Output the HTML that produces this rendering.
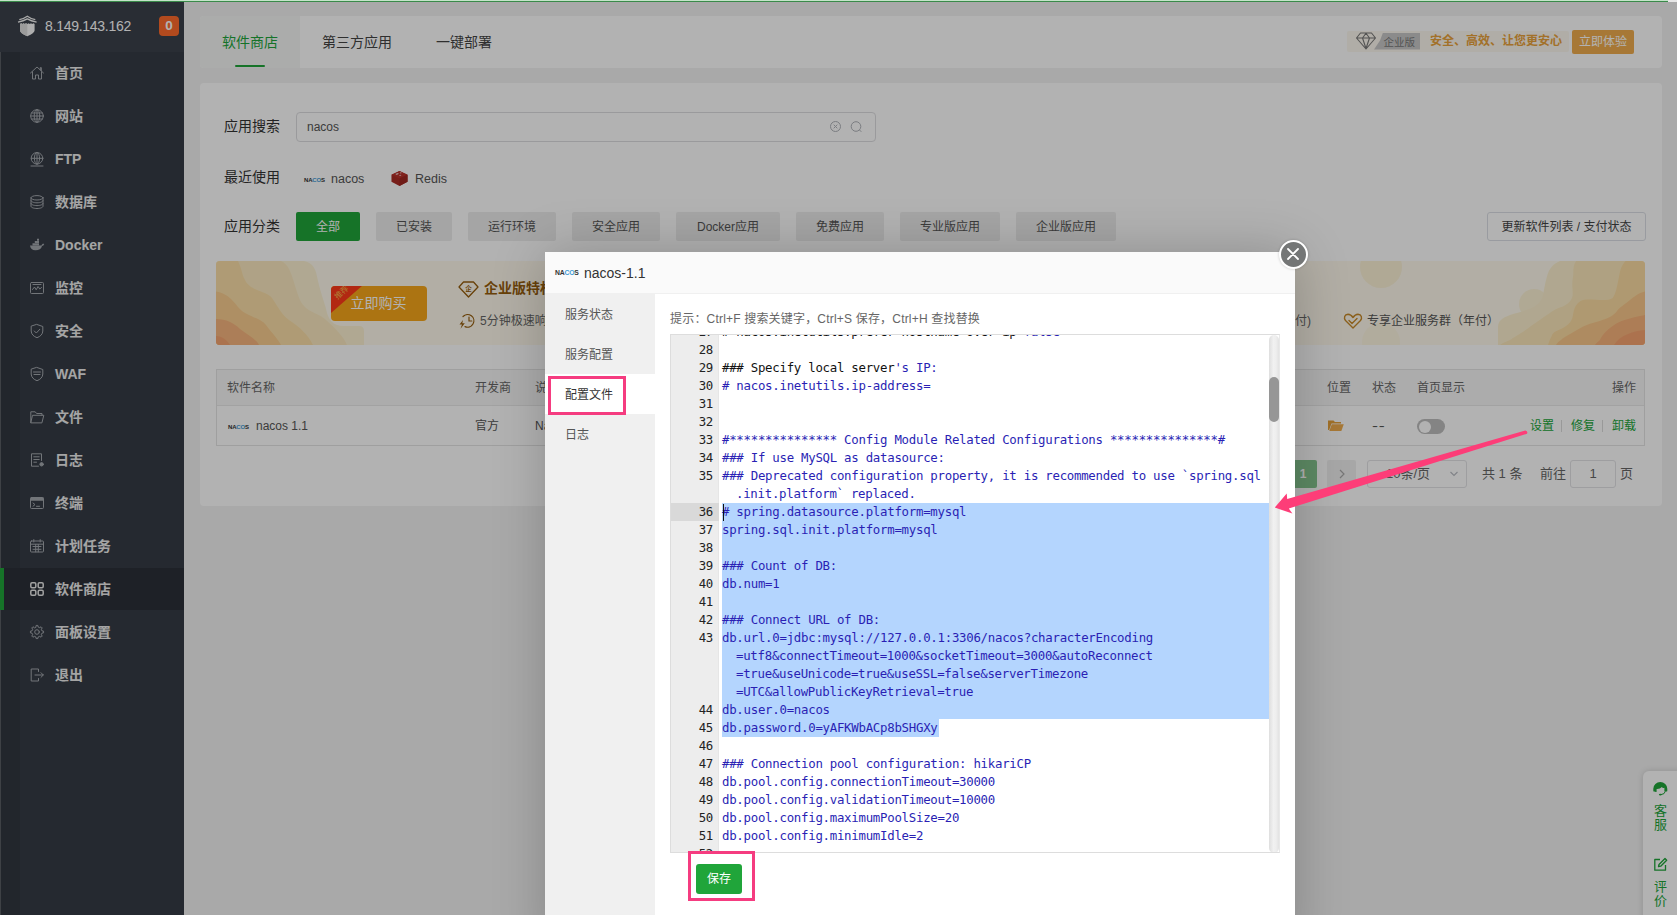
<!DOCTYPE html>
<html lang="zh-CN">
<head>
<meta charset="utf-8">
<title>软件商店</title>
<style>
*{box-sizing:border-box;margin:0;padding:0}
html,body{width:1677px;height:915px;overflow:hidden}
body{position:relative;background:#f2f2f2;font-family:"Liberation Sans","Noto Sans CJK SC",sans-serif;font-size:12px;color:#666;-webkit-font-smoothing:antialiased}
.abs{position:absolute}
.t{position:absolute;white-space:nowrap;line-height:20px;height:20px}
/* ---------- sidebar ---------- */
#side{position:absolute;left:0;top:0;width:184px;height:915px;background:#363c46}
#side .strip{position:absolute;left:0;top:52px;width:20px;height:863px;background:#31373f;border-left:1px solid #5a5e64}
#side .head{position:absolute;left:0;top:0;width:184px;height:52px;background:#3b414b}
#side .ip{position:absolute;left:45px;top:16px;font-size:14px;line-height:20px;color:#fff;letter-spacing:-.270px}
#side .badge{position:absolute;left:159px;top:16px;width:20px;height:20px;border-radius:4px;background:#ff6a2b;color:#fff;font-size:13.500px;font-weight:bold;line-height:20px;text-align:center}
#side .it{position:absolute;left:0;width:184px;height:42px}
#side .it span{position:absolute;left:55px;top:11px;font-size:14px;line-height:20px;color:#ececec;font-weight:bold;white-space:nowrap}
#side .it svg{position:absolute;left:29px;top:13px;width:16px;height:16px;fill:none;stroke:#a4a8ae;stroke-width:1;stroke-linecap:round;stroke-linejoin:round}
#side .it.on{background:#2b3038}
#side .it.on:before{content:"";position:absolute;left:0;top:0;width:4px;height:42px;background:#20a53a}
#side .it.on svg{stroke:#e8e8e8}
/* ---------- main ---------- */
.panel{position:absolute;background:#fff;border-radius:4px}
.lab{font-size:14px;color:#333}
.cat{position:absolute;top:212px;height:29px;line-height:30px;text-align:center;font-size:12px;color:#555;background:#ececec;border-radius:2px}
.cat.on{background:#20a53a;color:#fff}
.th{position:absolute;top:378px;line-height:20px;font-size:12px;color:#666;white-space:nowrap}
.td{position:absolute;top:416px;line-height:20px;font-size:12px;color:#555;white-space:nowrap}
#shade{position:absolute;left:0;top:0;width:1677px;height:915px;background:rgba(0,0,0,.3)}
/* ---------- modal ---------- */
#modal{position:absolute;left:545px;top:252px;width:750px;height:700px;background:#fff;box-shadow:1px 1px 50px rgba(0,0,0,.22)}
#modal .mh{position:absolute;left:0;top:0;width:750px;height:42px;background:#fafafa;border-bottom:1px solid #f0f0f0}
#modal .ms{position:absolute;left:0;top:42px;width:110px;height:660px;background:#f0f0f0}
#modal .mi{position:absolute;left:0;width:110px;height:40px;line-height:40px;padding-left:20px;font-size:12px;color:#555}
#modal .mi.on{background:#fff;color:#333}
#ed{position:absolute;left:125px;top:82px;width:610px;height:519px;border:1px solid #ddd;border-right-color:#e8e8e8;background:#fff;overflow:hidden;font-family:"DejaVu Sans Mono","Liberation Mono",monospace;font-size:12.400px;letter-spacing:-.276px}
#ed .gut{position:absolute;left:0;top:0;width:48px;height:520px;background:#ededed;border-right:1px solid #e6e6e6}
#ed .ln{position:absolute;left:0;width:42px;text-align:right;height:18px;line-height:18px;color:#222;white-space:pre}
#ed .cl{position:absolute;left:52px;height:18px;line-height:18px;color:#2a1fb4;white-space:pre}
#ed .sel{position:absolute;left:51px;background:#b4d5fe}
.pink{position:absolute;border:3px solid #f53c80}
</style>
</head>
<body>
<div id="side">
  <div class="strip"></div>
  <div class="head">
    <svg class="abs" style="left:17px;top:15px" width="21" height="22" viewBox="0 0 21 22">
      <path d="M2.300 4.700 Q7 3.800 10.300 1.300 Q13.600 3.800 18.300 4.700" fill="none" stroke="#f4f4f4" stroke-width="1.200"/>
      <path d="M1 7.100 Q6.500 6 10.300 3.900 Q14 6 19.600 7.100" fill="none" stroke="#f4f4f4" stroke-width="1.300"/>
      <path d="M3 9 L4.200 8.200 L5.400 9 L6.600 8.200 L7.800 9 L9 8.200 L10.300 9 L11.600 8.200 L12.800 9 L14 8.200 L15.200 9 L16.400 8.200 L17.600 9 V15.500 Q17.600 18 10.300 21.200 Q3 18 3 15.500 Z" fill="#fafafa"/>
      <path d="M3 9 L4.200 8.200 L5.400 9 L6.600 8.200 L7.800 9 L9 8.200 L10.300 9 V21.200 Q3 18 3 15.500 Z" fill="#dedede"/>
    </svg>
    <div class="ip">8.149.143.162</div>
    <div class="badge">0</div>
  </div>
  <div class="it" style="top:52px"><svg viewBox="0 0 16 16"><path d="M1.500 8 L8 2 L14.500 8 M3.500 6.800 V14 H6.500 V10 H9.500 V14 H12.500 V6.800 M11.300 4.800 V2.600 H12.300 V5.700"/></svg><span>首页</span></div>
  <div class="it" style="top:95px"><svg viewBox="0 0 16 16"><circle cx="8" cy="8" r="6.300"/><ellipse cx="8" cy="8" rx="2.800" ry="6.300"/><path d="M1.700 8 H14.300 M2.600 5 H13.400 M2.600 11 H13.400 M8 1.700 V14.300"/></svg><span>网站</span></div>
  <div class="it" style="top:138px"><svg viewBox="0 0 16 16"><circle cx="8" cy="7.300" r="5.800"/><ellipse cx="8" cy="7.300" rx="2.600" ry="5.800"/><path d="M2.200 7.300 H13.800 M8 1.500 V13.100 M2 15 H14"/></svg><span>FTP</span></div>
  <div class="it" style="top:181px"><svg viewBox="0 0 16 16"><ellipse cx="8" cy="3.800" rx="6" ry="2.200"/><path d="M2 3.800 V12.200 C2 13.500 4.700 14.500 8 14.500 C11.300 14.500 14 13.500 14 12.200 V3.800 M2 6.600 C2 7.900 4.700 8.800 8 8.800 C11.300 8.800 14 7.900 14 6.600 M2 9.400 C2 10.700 4.700 11.600 8 11.600 C11.300 11.600 14 10.700 14 9.400"/></svg><span>数据库</span></div>
  <div class="it" style="top:224px"><svg viewBox="0 0 16 16"><path d="M1 8.500 H12.500 C13 7 13.800 6.600 15.200 6.900 C14.800 8.200 14 8.800 13 8.900 C12.300 11.800 10 13.200 6.500 13.200 C3.200 13.200 1.300 11.500 1 8.500 Z M3.500 6.300 H10 V8.300 H3.500 Z M5.800 4 H10 V6 H5.800 Z M8 1.800 H10 V3.800 H8 Z" fill="#a4a8ae" stroke="none"/></svg><span>Docker</span></div>
  <div class="it" style="top:267px"><svg viewBox="0 0 16 16"><rect x="1.500" y="2.500" width="13" height="11" rx="1"/><path d="M3.500 9.500 L5.500 7 L7.200 9.800 L9 6.500 L10.800 9 L12.500 7.500 M4 4.500 H12" /></svg><span>监控</span></div>
  <div class="it" style="top:310px"><svg viewBox="0 0 16 16"><path d="M8 1.500 L13.800 3.500 V8 C13.800 11.200 11.300 13.500 8 14.700 C4.700 13.500 2.200 11.200 2.200 8 V3.500 Z M5.300 8 L7.300 10 L10.800 6.300"/></svg><span>安全</span></div>
  <div class="it" style="top:353px"><svg viewBox="0 0 16 16"><path d="M8 1.500 L13.800 3.500 V8 C13.800 11.200 11.300 13.500 8 14.700 C4.700 13.500 2.200 11.200 2.200 8 V3.500 Z M4.500 6 H11.500 M5 8.500 H11"/></svg><span>WAF</span></div>
  <div class="it" style="top:396px"><svg viewBox="0 0 16 16"><path d="M1.800 13.500 V2.800 H6.200 L7.600 4.500 H13 V6.300 M1.800 13.500 L3.500 6.300 H14.800 L13 13.500 Z"/></svg><span>文件</span></div>
  <div class="it" style="top:439px"><svg viewBox="0 0 16 16"><path d="M12.500 8.500 V1.800 H2.500 V14.200 H9.500 M4.800 4.800 H10.200 M4.800 7.500 H10.200 M4.800 10.200 H7.500"/><circle cx="12.600" cy="12.300" r="1.700" fill="#a4a8ae"/></svg><span>日志</span></div>
  <div class="it" style="top:482px"><svg viewBox="0 0 16 16"><rect x="1.500" y="2.500" width="13" height="11" rx="1"/><path d="M1.500 5.200 H14.500 M4 8 L6 9.600 L4 11.200 M7.500 11.300 H10.500"/><rect x="1.500" y="2.500" width="13" height="2.700" fill="#a4a8ae" stroke="none"/></svg><span>终端</span></div>
  <div class="it" style="top:525px"><svg viewBox="0 0 16 16"><rect x="1.500" y="3" width="13" height="11" rx="1"/><path d="M1.500 6.200 H14.500 M4.800 1.600 V4 M11.200 1.600 V4 M4 8.500 H12 M4 11.300 H12 M6.700 6.500 V13.800 M9.300 6.500 V13.800"/></svg><span>计划任务</span></div>
  <div class="it on" style="top:568px"><svg viewBox="0 0 16 16" style="stroke-width:1.500"><rect x="1.800" y="1.800" width="5" height="5" rx="1.200"/><rect x="9.200" y="1.800" width="5" height="5" rx="1.200"/><rect x="1.800" y="9.200" width="5" height="5" rx="1.200"/><rect x="9.200" y="9.200" width="5" height="5" rx="1.200"/></svg><span>软件商店</span></div>
  <div class="it" style="top:611px"><svg viewBox="0 0 16 16"><circle cx="8" cy="8" r="2.300"/><path d="M6.89 3.02 L7.17 1.45 L8.83 1.45 L9.11 3.02 L10.73 3.69 L12.05 2.78 L13.22 3.95 L12.31 5.27 L12.98 6.89 L14.55 7.17 L14.55 8.83 L12.98 9.11 L12.31 10.73 L13.22 12.05 L12.05 13.22 L10.73 12.31 L9.11 12.98 L8.83 14.55 L7.17 14.55 L6.89 12.98 L5.27 12.31 L3.95 13.22 L2.78 12.05 L3.69 10.73 L3.02 9.11 L1.45 8.83 L1.45 7.17 L3.02 6.89 L3.69 5.27 L2.78 3.95 L3.95 2.78 L5.27 3.69 Z"/></svg><span>面板设置</span></div>
  <div class="it" style="top:654px"><svg viewBox="0 0 16 16"><path d="M9.500 4.500 V2 H2.200 V14 H9.500 V11.500 M6 8 H14.300 M12 5.700 L14.300 8 L12 10.300"/></svg><span>退出</span></div>
</div>

<div class="abs" style="left:0;top:0;width:1677px;height:2px;background:#e6e6e6;z-index:50"></div><div class="abs" style="left:0;top:0;width:1668px;height:1px;background:#c4e4c9;z-index:51"></div><div class="abs" style="left:0;top:1px;width:1668px;height:1px;background:#3a8a4a;z-index:51"></div>
<!-- tabs panel -->
<div class="panel" style="left:200px;top:15.500px;width:1462px;height:52px">
  <div class="abs" style="left:0;top:0;width:100px;height:52px;background:#f5f7f5;border-radius:4px 0 0 4px"></div>
  <div class="t" style="left:22px;top:16px;font-size:14px;color:#20a53a">软件商店</div>
  <div class="abs" style="left:35px;top:49px;width:30px;height:2px;background:#20a53a;border-radius:1px"></div>
  <div class="t" style="left:122px;top:16px;font-size:14px;color:#444">第三方应用</div>
  <div class="t" style="left:236px;top:16px;font-size:14px;color:#444">一键部署</div>
  <!-- enterprise promo -->
  <div class="abs" style="left:1147px;top:15px;width:222px;height:21px;background:#fdf8ef;border-radius:2px"></div>
  <svg class="abs" style="left:1155px;top:15px" width="22" height="20" viewBox="0 0 22 20" fill="none" stroke="#777" stroke-width="1.1" stroke-linejoin="round"><path d="M5.500 2 H16.500 L20.500 7 L11 18 L1.500 7 Z M1.500 7 H20.500 M7.500 7 L11 2.200 L14.500 7 L11 17.500 Z"/></svg>
  <div class="abs" style="left:1174px;top:17px;width:46px;height:17px;background:#c8c8c8;clip-path:polygon(9px 0,100% 0,100% 100%,0 100%,6px 8px)"></div>
  <div class="t" style="left:1183.500px;top:16px;font-size:10.500px;color:#777">企业版</div>
  <div class="t" style="left:1230px;top:15px;font-size:12px;color:#e9a23b;font-weight:bold">安全、高效、让您更安心</div>
  <div class="abs" style="left:1372px;top:14px;width:62px;height:24px;background:#f0ad4e;border-radius:2px;color:#fff;font-size:12px;line-height:24px;text-align:center">立即体验</div>
</div>
<!-- content panel -->
<div class="panel" style="left:200px;top:83px;width:1462px;height:423px"></div>
<div class="t lab" style="left:224px;top:116px">应用搜索</div>
<div class="abs" style="left:296px;top:112px;width:580px;height:30px;border:1px solid #dddde0;border-radius:4px;background:#fff"></div>
<div class="t" style="left:307px;top:117px;color:#555">nacos</div>
<svg class="abs" style="left:829px;top:120px" width="40" height="14" viewBox="0 0 40 14" fill="none" stroke="#b0b3b9" stroke-width="1"><circle cx="6.500" cy="6.500" r="5"/><path d="M4.700 4.700 L8.300 8.300 M8.300 4.700 L4.700 8.300"/><circle cx="27" cy="6.500" r="4.800"/><path d="M30.500 10 L32.300 11.800"/></svg>
<div class="t lab" style="left:224px;top:167px">最近使用</div>
<div class="t" style="left:304px;top:170px;font-size:6px;font-weight:bold;color:#333;letter-spacing:-.2px">NA<span style="color:#3f9bd6">CO</span>S</div>
<div class="t" style="left:331px;top:169px;font-size:12.500px;color:#555">nacos</div>
<svg class="abs" style="left:390px;top:170px" width="19" height="17" viewBox="0 0 20 18"><path d="M1.500 5 L10 1 L18.500 5 L18.500 12.500 L10 17 L1.500 12.500 Z" fill="#ab2b25"/><path d="M1.500 5 L10 9 L18.500 5 L10 1 Z" fill="#b8322b"/><path d="M10 9 L10 17 L18.500 12.500 L18.500 5 Z" fill="#a02721"/><path d="M5.500 4.300 L8 3.200 L9.500 4 L7 5.200 Z M10 3 L11.500 2.500 L12.500 3.200 L11 3.800Z M9.500 5.500 L11 5 L12 5.800 L10.500 6.400Z" fill="#fff" opacity=".7"/></svg>
<div class="t" style="left:415px;top:169px;font-size:12.500px;color:#555">Redis</div>
<div class="t lab" style="left:224px;top:216px">应用分类</div>
<div class="cat on" style="left:296px;width:64px">全部</div>
<div class="cat" style="left:376px;width:76px">已安装</div>
<div class="cat" style="left:468px;width:88px">运行环境</div>
<div class="cat" style="left:572px;width:88px">安全应用</div>
<div class="cat" style="left:676px;width:104px">Docker应用</div>
<div class="cat" style="left:796px;width:88px">免费应用</div>
<div class="cat" style="left:900px;width:100px">专业版应用</div>
<div class="cat" style="left:1016px;width:100px">企业版应用</div>
<div class="abs" style="left:1487px;top:212px;width:159px;height:29px;border:1px solid #dcdfe6;border-radius:3px;background:#fff;text-align:center;line-height:28px;font-size:12px;color:#444">更新软件列表 / 支付状态</div>
<!-- banner -->
<div class="abs" id="banner" style="left:216px;top:261px;width:1429px;height:84px;border-radius:4px;background:#fffaec;overflow:hidden">
  <svg class="abs" style="left:0;top:0" width="150" height="84" viewBox="0 0 150 84">
    <path d="M0 0 H88 C98 2 100 10 101 15.500 C104 30 108 40 110 47.700 C112 58 116 65 128 65 H143 Q148 65 148 70 V84 H0 Z" fill="#fcf1d2"/>
    <path d="M0 0 H65 C72 3 74 10 76 15 C80 28 82 34 84 39 C90 52 104 52 110 59 C120 68 128 76 131 84 H0 Z" fill="#fbe9c0"/>
    <path d="M0 0 H22 C26 8 26 14 29 19 C34 30 50 30 56 37 C62 46 66 54 73 59 C84 66 92 74 97 84 H0 Z" fill="#fbdfa8"/>
    <path d="M0 30.500 C10 32 16 38 22 46 C30 56 44 56 50 64 C56 72 62 78 65 84 H0 Z" fill="#facd90"/>
    <path d="M0 58 C10 58 18 62 24 68 C32 74 40 78 43 84 H0 Z" fill="#f7b57e"/>
    <path d="M0 75 C6 75 11 79 14 84 H0 Z" fill="#f5a572"/>
  </svg>
  <div class="abs" style="left:1144px;top:-15px;width:42px;height:42px;border-radius:21px;background:#fbefcf;opacity:.75"></div>
  <div class="abs" style="left:1146px;top:62px;width:38px;height:38px;border-radius:19px;background:#fbefcf;opacity:.35"></div>
  <div class="abs" style="left:1303px;top:28px;width:30px;height:30px;border-radius:15px;background:#fcf0d0;opacity:.8"></div>
  <svg class="abs" style="left:1282px;top:0" width="147" height="84" viewBox="0 0 147 84">
    <path d="M62 0 C52 4 50 12 49 15.500 C46 26 46 32 44 37 C40 48 24 50 12 54 C4 57 0 60 0 66 V84 H147 V0 Z" fill="#fcf0cf"/>
    <path d="M78 0 C74 6 76 12 75 15.500 C73 26 76 32 74 37 C70 46 60 46 54.600 50 C46 56 40 60 33 65 C24 72 16 76 12 79 C8 81 4 82 2 84 H147 V0 Z" fill="#fbe7bb"/>
    <path d="M127.600 0 C122 6 122 12 121 15.500 C119 26 118 32 114.700 37 C108 42 90 36 82.500 40 C74 46 76 54 74 58 C70 68 58 68 54.600 73 C52 78 51 81 50 84 H147 V0 Z" fill="#fbdca2"/>
    <path d="M147 30.500 C140 32 136 36 132 39 C126 44 122 46 119 50 C112 60 94 60 82.500 67 C74 72 66 76 63 79 C60 81 59 82 58 84 H147 Z" fill="#fac88c"/>
    <path d="M147 54 C138 56 124 58 114.700 65 C108 70 104 74 102 79 C100 81 98 82 97 84 H147 Z" fill="#f8b37c"/>
    <path d="M147 69 C136 70 122 74 116 84 H147 Z" fill="#f6a470"/>
  </svg>
  <div class="abs" style="left:114.500px;top:24.500px;width:96px;height:35.500px;background:#f6a71a;border-radius:4px;overflow:hidden;color:#fff;font-size:14px;line-height:35px;text-align:center;padding-left:0">立即购买
    <div class="abs" style="left:0;top:0;width:32px;height:28px;background:#ff3a1a;clip-path:polygon(0 0,100% 0,0 100%)"></div>
    <div class="abs" style="left:-3px;top:1px;width:28px;height:12px;transform:rotate(-42deg);font-size:8px;line-height:12px;color:#fbb24c;text-align:center;padding:0">推荐</div>
  </div>
  <svg class="abs" style="left:242px;top:20px" width="21" height="17" viewBox="0 0 21 17" fill="none" stroke="#965d0e" stroke-width="1.300" stroke-linejoin="round"><path d="M5.500 1 H15.500 L20 6 L10.500 16 L1 6 Z"/><text x="10.500" y="9.500" font-size="6.500" text-anchor="middle" fill="#965d0e" stroke="none" font-family="Noto Sans CJK SC,sans-serif" font-weight="bold">企</text></svg>
  <div class="t" style="left:268px;top:17px;font-size:14px;font-weight:bold;color:#965d0e">企业版特权</div>
  <svg class="abs" style="left:242px;top:51px" width="18" height="18" viewBox="0 0 18 18" fill="none" stroke="#965d0e" stroke-width="1.200" stroke-linecap="round"><path d="M5 4.500 A6.300 6.300 0 1 1 7 14.600"/><path d="M11 5 V9 H13.800"/><path d="M5 8 L1.500 12.500 H4 L2.500 16.800 L6.800 11.300 H4.300 Z" fill="#965d0e" stroke="none"/></svg>
  <div class="t" style="left:264px;top:50px;font-size:12px;color:#666">5分钟极速响应</div>
  <div class="t" style="left:1063px;top:50px;font-size:12px;color:#666">(年付)</div>
  <svg class="abs" style="left:1127px;top:51px" width="20" height="18" viewBox="0 0 20 18" fill="none" stroke="#c88a2a" stroke-width="1.400" stroke-linejoin="round" stroke-linecap="round"><path d="M10 16 L2.500 8.500 C0.500 6 1.500 2.500 5 2.300 C7.500 2.300 9 4 10 5.500 C11 4 12.500 2.300 15 2.300 C18.500 2.500 19.500 6 17.500 8.500 Z"/><path d="M6 8.500 L9 11.500 L14 6.500"/></svg>
  <div class="t" style="left:1151px;top:50px;font-size:12px;color:#555">专享企业服务群（年付）</div>
</div>
<!-- table -->
<div class="abs" style="left:216px;top:369px;width:1429px;height:77px;border:1px solid #e4e4e4;background:#fff"></div>
<div class="abs" style="left:217px;top:370px;width:1427px;height:36px;background:#f6f6f6;border-bottom:1px solid #e8e8e8"></div>
<div class="th" style="left:227px">软件名称</div>
<div class="th" style="left:475px">开发商</div>
<div class="th" style="left:535px">说明</div>
<div class="th" style="left:1327px">位置</div>
<div class="th" style="left:1372px">状态</div>
<div class="th" style="left:1417px">首页显示</div>
<div class="th" style="left:1612px">操作</div>
<div class="td" style="left:228px;top:417px;font-size:6px;font-weight:bold;color:#333;letter-spacing:-.2px">NA<span style="color:#3f9bd6">CO</span>S</div>
<div class="td" style="left:256px">nacos 1.1</div>
<div class="td" style="left:475px">官方</div>
<div class="td" style="left:535px">Nacos</div>
<svg class="abs" style="left:1327px;top:418px" width="18" height="15" viewBox="0 0 18 15"><path d="M1 2.500 H6.500 L8 4 H14 V5.500 H4.500 L2.200 12 H1 Z" fill="#e5a13a"/><path d="M4.800 6.200 H16.800 L14.300 13 H2.300 Z" fill="#f0ad4e"/></svg>
<div class="td" style="left:1372px;letter-spacing:.500px;transform:scaleX(1.500);transform-origin:0 50%">--</div>
<div class="abs" style="left:1417px;top:419px;width:28px;height:15px;border-radius:8px;background:#bdbdbd"></div>
<div class="abs" style="left:1418.500px;top:420.500px;width:12px;height:12px;border-radius:6px;background:#fff"></div>
<div class="td" style="left:1530px;color:#20a53a">设置</div>
<div class="td" style="left:1571px;color:#20a53a">修复</div>
<div class="td" style="left:1612px;color:#20a53a">卸载</div>
<div class="abs" style="left:1561px;top:420px;width:1px;height:12px;background:#dcdcdc"></div>
<div class="abs" style="left:1602px;top:420px;width:1px;height:12px;background:#dcdcdc"></div>
<!-- pagination -->
<div class="abs" style="left:1289px;top:460px;width:28px;height:28px;border-radius:2px;background:#86c690;color:#fff;font-size:12px;font-weight:bold;line-height:28px;text-align:center">1</div>
<div class="abs" style="left:1327px;top:460px;width:29px;height:28px;border-radius:2px;background:#f0f0f0"></div>
<svg class="abs" style="left:1337px;top:468px" width="10" height="12" viewBox="0 0 10 12" fill="none" stroke="#aaa" stroke-width="1.200"><path d="M3 2 L7 6 L3 10"/></svg>
<div class="abs" style="left:1367px;top:460px;width:100px;height:28px;border:1px solid #e2e2e6;border-radius:3px;background:#fff"></div>
<div class="t" style="left:1386px;top:464px;font-size:13px;color:#666">10条/页</div>
<svg class="abs" style="left:1449px;top:469px" width="10" height="10" viewBox="0 0 10 10" fill="none" stroke="#b8bbc2" stroke-width="1.100"><path d="M1.500 3 L5 6.500 L8.500 3"/></svg>
<div class="t" style="left:1482px;top:464px;font-size:13px;color:#666">共 1 条</div>
<div class="t" style="left:1540px;top:464px;font-size:13px;color:#666">前往</div>
<div class="abs" style="left:1570px;top:460px;width:46px;height:28px;border:1px solid #e2e2e6;border-radius:3px;background:#fff;text-align:center;line-height:26px;font-size:13px;color:#666">1</div>
<div class="t" style="left:1620px;top:464px;font-size:13px;color:#666">页</div>
<!-- float widget -->
<div class="abs" style="left:1643px;top:771px;width:40px;height:160px;border-radius:6px 0 0 0;background:#fff;box-shadow:0 0 6px rgba(0,0,0,.15)"></div>
<svg class="abs" style="left:1653px;top:781.500px" width="15" height="14" viewBox="0 0 15 14"><path d="M1.200 9.600 A0.900 0.900 0 0 1 0.300 8.700 L0.300 6.800 A7 6.700 0 0 1 14.300 6.800 L14.300 8.700 A0.900 0.900 0 0 1 13.400 9.600 L11.400 9.600 L11.400 5.800 Q9.600 6.600 8.900 5 Q7 7.300 3.600 7.100 L3.600 9.800 Q3 10.300 1.200 9.600 Z" fill="#20a53a"/><path d="M12.300 9.300 Q11.800 12.300 8 12.600" fill="none" stroke="#20a53a" stroke-width="1"/><ellipse cx="7.300" cy="12.600" rx="1.400" ry=".900" fill="#20a53a"/></svg>
<div class="t" style="left:1654px;top:803.500px;width:14px;height:32px;line-height:14.500px;font-size:13px;color:#20a53a;white-space:normal">客服</div>
<svg class="abs" style="left:1653px;top:857px" width="15" height="15" viewBox="0 0 15 15" fill="none" stroke="#20a53a" stroke-width="1.300" stroke-linejoin="round"><path d="M7 2.500 H1.800 V13.200 H12.500 V8"/><path d="M5.500 9.700 L6 7.500 L12 1.500 L13.700 3.200 L7.700 9.200 Z"/></svg>
<div class="t" style="left:1654px;top:879.500px;width:14px;height:32px;line-height:14.500px;font-size:13px;color:#20a53a;white-space:normal">评价</div>

<div id="shade"></div>
<div id="modal">
  <div class="mh">
    <div class="t" style="left:10px;top:11px;font-size:6.800px;font-weight:bold;color:#333;letter-spacing:-.2px">NA<span style="color:#3f9bd6">CO</span>S</div>
    <div class="t" style="left:39px;top:11px;font-size:14px;color:#333">nacos-1.1</div>
  </div>
  <div class="ms"></div>
  <div class="mi" style="top:43px">服务状态</div>
  <div class="mi" style="top:83px">服务配置</div>
  <div class="mi on" style="top:122px;padding-top:1px">配置文件</div>
  <div class="mi" style="top:163px">日志</div>
  <div class="t" style="left:125px;top:57px;font-size:12px;color:#666;letter-spacing:.190px">提示：Ctrl+F 搜索关键字，Ctrl+S 保存，Ctrl+H 查找替换</div>
  <div id="ed">
    <div class="gut"></div>
    <div class="sel" style="top:168px;width:548px;height:18px"></div>
    <div class="sel" style="top:186px;width:548px;height:18px"></div>
    <div class="sel" style="top:204px;width:548px;height:18px"></div>
    <div class="sel" style="top:222px;width:548px;height:18px"></div>
    <div class="sel" style="top:240px;width:548px;height:18px"></div>
    <div class="sel" style="top:258px;width:548px;height:18px"></div>
    <div class="sel" style="top:276px;width:548px;height:18px"></div>
    <div class="sel" style="top:294px;width:548px;height:18px"></div>
    <div class="sel" style="top:312px;width:548px;height:18px"></div>
    <div class="sel" style="top:330px;width:548px;height:18px"></div>
    <div class="sel" style="top:348px;width:548px;height:18px"></div>
    <div class="sel" style="top:366px;width:548px;height:18px"></div>
    <div class="sel" style="top:384px;width:217px;height:18px"></div>
    <div class="ln" style="top:-12px">27</div>
    <div class="cl" style="top:-12px;left:51px"><span style="color:#111"># nacos.inetutils.prefer-hostname-over-ip=</span><span style="color:#2a1fb4">false</span></div>
    <div class="ln" style="top:6px">28</div>
    <div class="ln" style="top:24px">29</div>
    <div class="cl" style="top:24px;left:51px"><span style="color:#111">### Specify local server</span><span style="color:#2a1fb4">&#x27;s IP:</span></div>
    <div class="ln" style="top:42px">30</div>
    <div class="cl" style="top:42px;left:51px"><span style="color:#2a1fb4"># nacos.inetutils.ip-address=</span></div>
    <div class="ln" style="top:60px">31</div>
    <div class="ln" style="top:78px">32</div>
    <div class="ln" style="top:96px">33</div>
    <div class="cl" style="top:96px;left:51px"><span style="color:#2a1fb4">#*************** Config Module Related Configurations ***************#</span></div>
    <div class="ln" style="top:114px">34</div>
    <div class="cl" style="top:114px;left:51px"><span style="color:#2a1fb4">### If use MySQL as datasource:</span></div>
    <div class="ln" style="top:132px">35</div>
    <div class="cl" style="top:132px;left:51px"><span style="color:#2a1fb4">### Deprecated configuration property, it is recommended to use `spring.sql</span></div>
    <div class="cl" style="top:150px;left:65px"><span style="color:#2a1fb4">.init.platform` replaced.</span></div>
    <div class="abs" style="left:0;top:168px;width:48px;height:18px;background:#d9d9d9"></div>
    <div class="ln" style="top:168px">36</div>
    <div class="cl" style="top:168px;left:51px"><span style="color:#2a1fb4"># spring.datasource.platform=mysql</span></div>
    <div class="ln" style="top:186px">37</div>
    <div class="cl" style="top:186px;left:51px"><span style="color:#2a1fb4">spring.sql.init.platform=mysql</span></div>
    <div class="ln" style="top:204px">38</div>
    <div class="ln" style="top:222px">39</div>
    <div class="cl" style="top:222px;left:51px"><span style="color:#2a1fb4">### Count of DB:</span></div>
    <div class="ln" style="top:240px">40</div>
    <div class="cl" style="top:240px;left:51px"><span style="color:#2a1fb4">db.num=1</span></div>
    <div class="ln" style="top:258px">41</div>
    <div class="ln" style="top:276px">42</div>
    <div class="cl" style="top:276px;left:51px"><span style="color:#2a1fb4">### Connect URL of DB:</span></div>
    <div class="ln" style="top:294px">43</div>
    <div class="cl" style="top:294px;left:51px"><span style="color:#2a1fb4">db.url.0=jdbc:mysql://127.0.0.1:3306/nacos?characterEncoding</span></div>
    <div class="cl" style="top:312px;left:65px"><span style="color:#2a1fb4">=utf8&amp;connectTimeout=1000&amp;socketTimeout=3000&amp;autoReconnect</span></div>
    <div class="cl" style="top:330px;left:65px"><span style="color:#2a1fb4">=true&amp;useUnicode=true&amp;useSSL=false&amp;serverTimezone</span></div>
    <div class="cl" style="top:348px;left:65px"><span style="color:#2a1fb4">=UTC&amp;allowPublicKeyRetrieval=true</span></div>
    <div class="ln" style="top:366px">44</div>
    <div class="cl" style="top:366px;left:51px"><span style="color:#2a1fb4">db.user.0=nacos</span></div>
    <div class="ln" style="top:384px">45</div>
    <div class="cl" style="top:384px;left:51px"><span style="color:#2a1fb4">db.password.0=yAFKWbACp8bSHGXy</span></div>
    <div class="ln" style="top:402px">46</div>
    <div class="ln" style="top:420px">47</div>
    <div class="cl" style="top:420px;left:51px"><span style="color:#2a1fb4">### Connection pool configuration: hikariCP</span></div>
    <div class="ln" style="top:438px">48</div>
    <div class="cl" style="top:438px;left:51px"><span style="color:#2a1fb4">db.pool.config.connectionTimeout=30000</span></div>
    <div class="ln" style="top:456px">49</div>
    <div class="cl" style="top:456px;left:51px"><span style="color:#2a1fb4">db.pool.config.validationTimeout=10000</span></div>
    <div class="ln" style="top:474px">50</div>
    <div class="cl" style="top:474px;left:51px"><span style="color:#2a1fb4">db.pool.config.maximumPoolSize=20</span></div>
    <div class="ln" style="top:492px">51</div>
    <div class="cl" style="top:492px;left:51px"><span style="color:#2a1fb4">db.pool.config.minimumIdle=2</span></div>
    <div class="ln" style="top:510px">52</div>
    <div class="abs" style="left:598px;top:0;width:10px;height:518px;background:linear-gradient(90deg,#dedede,#f1f1f1 45%,#eee 70%,#e2e2e2);border-radius:5px"></div>
    <div class="abs" style="left:598px;top:41.500px;width:10px;height:45.500px;border-radius:5px;background:#969696"></div>
    <div class="abs" style="left:51.500px;top:169px;width:1.500px;height:17px;background:#111"></div>
  </div>
  <div class="abs" style="left:151px;top:612px;width:46px;height:30px;border-radius:3px;background:#20a53a;color:#fff;font-size:12px;line-height:30px;text-align:center">保存</div>
  <div class="abs" style="left:733.500px;top:-12.500px;width:29px;height:29px;border-radius:15px;background:#747676;border:2.800px solid #fff;box-shadow:0 0 3px rgba(0,0,0,.2)"></div>
  <svg class="abs" style="left:742px;top:-4px" width="12" height="12" viewBox="0 0 12 12" stroke="#fff" stroke-width="1.800" stroke-linecap="round"><path d="M1 1 L11 11 M11 1 L1 11"/></svg>
</div>

<div class="pink" style="left:548px;top:375.500px;width:77.500px;height:39px"></div>
<div class="pink" style="left:687.500px;top:851px;width:67.500px;height:50px"></div>
<svg class="abs" style="left:1260px;top:420px" width="280" height="100" viewBox="1260 420 280 100"><path d="M1525.300 430.500 Q1528.300 431.500 1527 433.700 L1288.800 508.400 L1292.400 513.600 L1274.800 507.600 L1286.700 493.400 L1287.200 499 Z" fill="#fd3d78"/></svg>

</body>
</html>
